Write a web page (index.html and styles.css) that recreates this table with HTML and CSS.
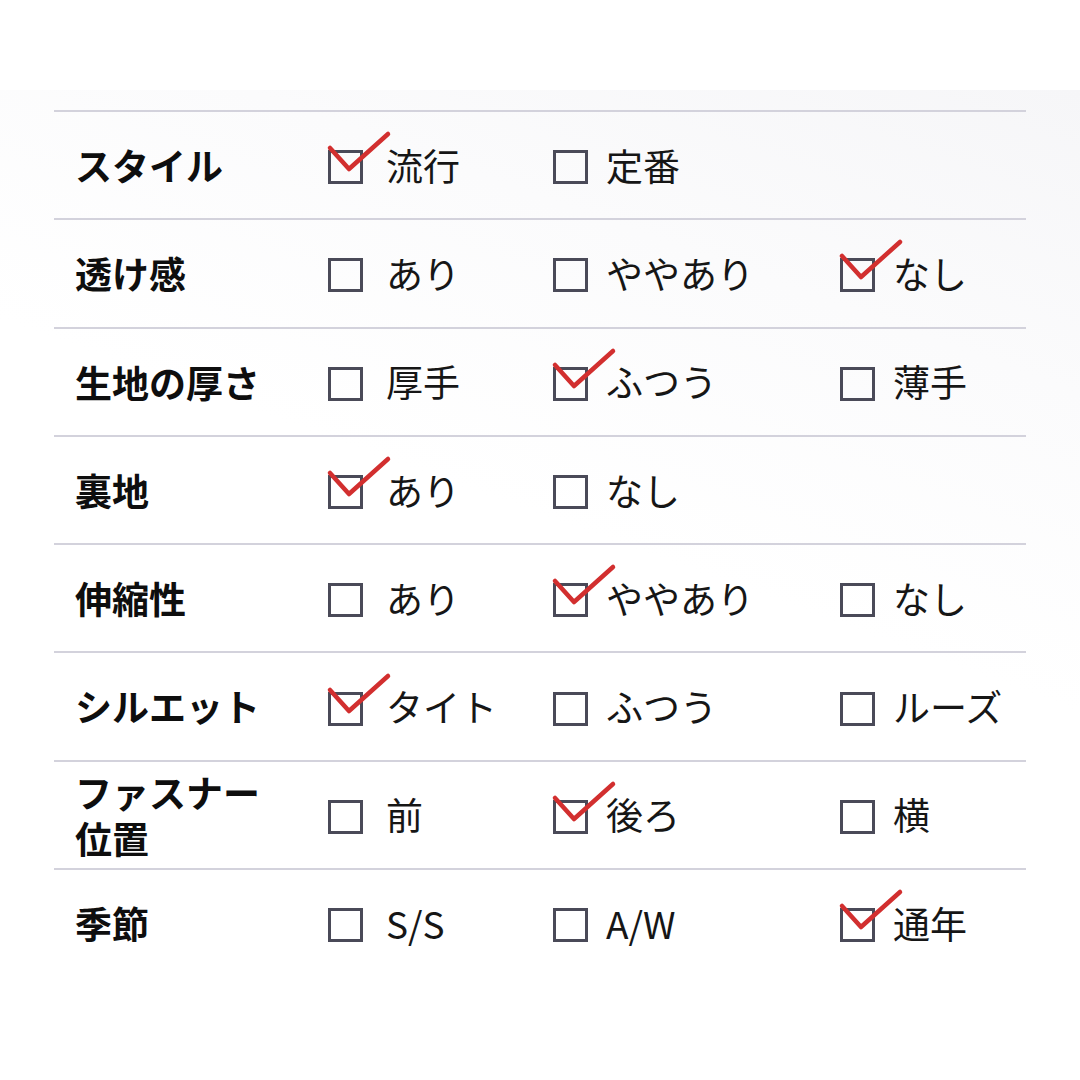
FILE: index.html
```html
<!DOCTYPE html>
<html lang="ja">
<head>
<meta charset="utf-8">
<link rel="stylesheet" href="styles.css">
</head>
<body>
<div class="page">
  <div class="sheet">
    <div class="row">
      <div class="label">スタイル</div>
      <div class="opt first checked"><span class="box"><svg class="check" viewBox="0 0 66 50"><polyline points="3,18 22,39 61,4"/></svg></span><span class="txt">流行</span></div>
      <div class="opt"><span class="box"></span><span class="txt">定番</span></div>
      <div></div>
    </div>
    <div class="row">
      <div class="label">透け感</div>
      <div class="opt first"><span class="box"></span><span class="txt">あり</span></div>
      <div class="opt"><span class="box"></span><span class="txt">ややあり</span></div>
      <div class="opt checked"><span class="box"><svg class="check" viewBox="0 0 66 50"><polyline points="3,18 22,39 61,4"/></svg></span><span class="txt">なし</span></div>
    </div>
    <div class="row">
      <div class="label">生地の厚さ</div>
      <div class="opt first"><span class="box"></span><span class="txt">厚手</span></div>
      <div class="opt checked"><span class="box"><svg class="check" viewBox="0 0 66 50"><polyline points="3,18 22,39 61,4"/></svg></span><span class="txt">ふつう</span></div>
      <div class="opt"><span class="box"></span><span class="txt">薄手</span></div>
    </div>
    <div class="row">
      <div class="label">裏地</div>
      <div class="opt first checked"><span class="box"><svg class="check" viewBox="0 0 66 50"><polyline points="3,18 22,39 61,4"/></svg></span><span class="txt">あり</span></div>
      <div class="opt"><span class="box"></span><span class="txt">なし</span></div>
      <div></div>
    </div>
    <div class="row">
      <div class="label">伸縮性</div>
      <div class="opt first"><span class="box"></span><span class="txt">あり</span></div>
      <div class="opt checked"><span class="box"><svg class="check" viewBox="0 0 66 50"><polyline points="3,18 22,39 61,4"/></svg></span><span class="txt">ややあり</span></div>
      <div class="opt"><span class="box"></span><span class="txt">なし</span></div>
    </div>
    <div class="row">
      <div class="label">シルエット</div>
      <div class="opt first checked"><span class="box"><svg class="check" viewBox="0 0 66 50"><polyline points="3,18 22,39 61,4"/></svg></span><span class="txt">タイト</span></div>
      <div class="opt"><span class="box"></span><span class="txt">ふつう</span></div>
      <div class="opt"><span class="box"></span><span class="txt">ルーズ</span></div>
    </div>
    <div class="row">
      <div class="label two"><span class="ln">ファスナー</span><span class="ln">位置</span></div>
      <div class="opt first"><span class="box"></span><span class="txt">前</span></div>
      <div class="opt checked"><span class="box"><svg class="check" viewBox="0 0 66 50"><polyline points="3,18 22,39 61,4"/></svg></span><span class="txt">後ろ</span></div>
      <div class="opt"><span class="box"></span><span class="txt">横</span></div>
    </div>
    <div class="row">
      <div class="label">季節</div>
      <div class="opt first"><span class="box"></span><span class="txt">S/S</span></div>
      <div class="opt"><span class="box"></span><span class="txt">A/W</span></div>
      <div class="opt checked"><span class="box"><svg class="check" viewBox="0 0 66 50"><polyline points="3,18 22,39 61,4"/></svg></span><span class="txt">通年</span></div>
    </div>
  </div>
</div>
</body>
</html>
```
FILE: styles.css
```css
* { box-sizing: border-box; }
html, body {
  margin: 0;
  padding: 0;
  background: #ffffff;
}
body {
  width: 1080px;
  height: 1080px;
  overflow: hidden;
  font-family: "Noto Sans CJK JP", "Noto Sans", sans-serif;
  color: #141414;
}
.page {
  margin-top: 90px;
  height: 990px;
  padding: 20px 54px 0 54px;
  background: linear-gradient(200deg, #f6f6f8 0%, #fbfbfc 22%, #ffffff 45%);
}
.sheet {
  width: 972px;
}
.row {
  display: grid;
  grid-template-columns: 274px 225px 287px 1fr;
  align-items: center;
  height: 108.3px;
  border-top: 2px solid #d3d2dc;
}
.label {
  padding-left: 21px;
  font-size: 37px;
  font-weight: 700;
  color: #0e0e0e;
  line-height: 1.2;
}
.label.two {
  display: flex;
  flex-direction: column;
  line-height: 46px;
}
.label.two .ln {
  display: block;
  height: 46px;
  overflow: visible;
}
.opt {
  display: flex;
  align-items: center;
  gap: 18px;
  font-size: 37px;
  line-height: 1;
}
.opt.first {
  gap: 23px;
}
.box {
  position: relative;
  width: 35px;
  height: 34px;
  border: 3px solid #4a4a58;
  flex: none;
  margin-top: 4px;
}
.check {
  position: absolute;
  left: -4px;
  top: -23px;
  width: 66px;
  height: 50px;
  overflow: visible;
}
.check polyline {
  fill: none;
  stroke: #d22f2f;
  stroke-width: 4.5;
  stroke-linecap: round;
  stroke-linejoin: round;
}
.txt {
  color: #161616;
}
```
